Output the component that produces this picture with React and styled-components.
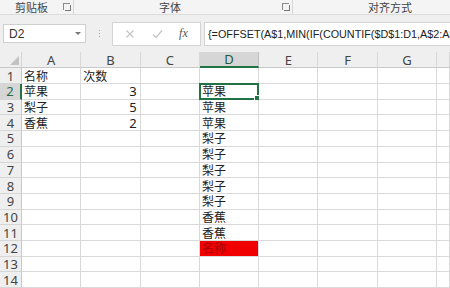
import React from 'react'
import styled, { createGlobalStyle } from 'styled-components'

const Global = createGlobalStyle`
  html, body { margin: 0; padding: 0; background: #fff; overflow: hidden; }
  body { font-family: "Noto Sans", "Noto Sans CJK SC", sans-serif; }
`

const Page = styled.div`
  width: 450px;
  height: 288px;
  overflow: hidden;
  display: flex;
  flex-direction: column;
  background: #fff;
`

const Ribbon = styled.div`
  height: 15px;
  display: flex;
  background: #f4f4f4;
  border-bottom: 1px solid #dcdcdc;
`

const Group = styled.div`
  position: relative;
  width: ${p => p.w}px;
  flex: none;
  display: flex;
  align-items: center;
  padding-left: ${p => p.pl}px;
  box-sizing: border-box;
  border-right: 1px solid ${p => (p.last ? 'transparent' : '#d6d6d6')};
  font-family: "Noto Sans CJK SC", sans-serif;
  font-size: 11px;
  line-height: 13px;
  color: #444;
`

const Launcher = styled.span`
  position: absolute;
  right: 3px;
  top: 3px;
  width: 6px;
  height: 6px;
  border-left: 1px solid #8a8a8a;
  border-top: 1px solid #8a8a8a;
  &::after {
    content: '';
    position: absolute;
    left: 1px;
    top: 1px;
    width: 5px;
    height: 5px;
    border-right: 1px solid #777;
    border-bottom: 1px solid #777;
  }
`

const FormulaBar = styled.div`
  height: 38px;
  display: flex;
  align-items: center;
  background: #efefef;
  padding: 1px 0 0 3px;
  box-sizing: border-box;
`

const NameBox = styled.div`
  width: 83px;
  height: 19px;
  box-sizing: border-box;
  background: #fff;
  border: 1px solid #cfcfcf;
  display: flex;
  align-items: center;
  justify-content: space-between;
  padding: 0 4px 0 5px;
  font-family: "Liberation Sans", sans-serif;
  font-size: 12px;
  color: #333;
`

const Caret = styled.span`
  width: 0;
  height: 0;
  border-left: 3px solid transparent;
  border-right: 3px solid transparent;
  border-top: 3px solid #777;
`

const Dots = styled.div`
  width: 26px;
  display: flex;
  flex-direction: column;
  align-items: center;
  gap: 2px;
  & span { width: 1px; height: 1px; background: #aaa; }
`

const FxBox = styled.div`
  width: 89px;
  height: 24px;
  box-sizing: border-box;
  background: #fff;
  border: 1px solid #d4d4d4;
  display: flex;
  align-items: center;
  justify-content: space-around;
  padding: 0 4px;
`

const Fx = styled.span`
  font-family: "Liberation Serif", serif;
  font-style: italic;
  font-size: 12px;
  color: #555;
`

const Formula = styled.div`
  flex: 1;
  min-width: 0;
  height: 24px;
  margin-left: 3px;
  background: #fff;
  border: 1px solid #d4d4d4;
  border-right: none;
  box-sizing: border-box;
  display: flex;
  align-items: center;
  padding-left: 3px;
  white-space: nowrap;
  overflow: hidden;
  font-family: "Liberation Sans", sans-serif;
  font-size: 10.8px;
  color: #222;
`

const Gap = styled.div`
  height: 1px;
  background: #efefef;
`

const Sheet = styled.div`
  display: grid;
  grid-template-columns: 22px repeat(7, 59.3px) 1fr;
  grid-template-rows: 16px;
  grid-auto-rows: 15.7px;
`

const Corner = styled.div`
  position: relative;
  background: #efefef;
  border-right: 1px solid #d4d4d4;
  border-bottom: 1px solid #c8c8c8;
  &::after {
    content: '';
    position: absolute;
    right: 2px;
    bottom: 2px;
    border-left: 9px solid transparent;
    border-bottom: 9px solid #c2c2c2;
  }
`

const ColHead = styled.div`
  box-sizing: border-box;
  background: ${p => (p.active ? '#d6d6d6' : '#efefef')};
  border-right: 1px solid ${p => (p.active ? '#c0c0c0' : '#d8d8d8')};
  border-bottom: ${p => (p.active ? '2px solid #217346' : '1px solid #c8c8c8')};
  display: flex;
  align-items: center;
  justify-content: center;
  font-family: "Noto Sans", sans-serif;
  font-size: 13px;
  line-height: 14px;
  color: ${p => (p.active ? '#1e5a36' : '#444')};
`

const RowHead = styled.div`
  box-sizing: border-box;
  background: ${p => (p.active ? '#d6d6d6' : '#efefef')};
  border-right: ${p => (p.active ? '2px solid #217346' : '1px solid #c8c8c8')};
  border-bottom: 1px solid #d6d6d6;
  display: flex;
  align-items: center;
  justify-content: center;
  font-family: "Noto Sans", sans-serif;
  font-size: 13px;
  line-height: 14px;
  color: ${p => (p.active ? '#2c6a44' : '#444')};
`

const Cell = styled.div`
  position: relative;
  box-sizing: border-box;
  border-right: 1px solid #d9d9d9;
  border-bottom: 1px solid #d9d9d9;
  background: ${p => p.bg || '#fff'};
  display: flex;
  align-items: center;
  justify-content: ${p => (p.num ? 'flex-end' : 'flex-start')};
  padding: 0 3px 0 2px;
  white-space: nowrap;
  font-family: ${p => (p.num ? '"Noto Sans", sans-serif' : '"Noto Sans CJK SC", sans-serif')};
  font-size: ${p => (p.num ? '13px' : '12px')};
  line-height: 14px;
  color: ${p => p.color || '#222'};
`

const Selection = styled.div`
  position: absolute;
  left: -1px;
  top: -1px;
  right: -1px;
  bottom: -1px;
  border: 2px solid #217346;
  pointer-events: none;
  &::after {
    content: '';
    position: absolute;
    right: -4px;
    bottom: -4px;
    width: 5px;
    height: 5px;
    background: #217346;
    border: 1px solid #fff;
  }
`

const cols = ['A', 'B', 'C', 'D', 'E', 'F', 'G', '']

const data = {
  1: { A: '名称', B: '次数' },
  2: { A: '苹果', B: '3', D: '苹果' },
  3: { A: '梨子', B: '5', D: '苹果' },
  4: { A: '香蕉', B: '2', D: '苹果' },
  5: { D: '梨子' },
  6: { D: '梨子' },
  7: { D: '梨子' },
  8: { D: '梨子' },
  9: { D: '梨子' },
  10: { D: '香蕉' },
  11: { D: '香蕉' },
  12: { D: '名称' },
}

const rows = Array.from({ length: 14 }, (_, i) => i + 1)

export default function App() {
  return (
    <Page>
      <Global />
      <Ribbon>
        <Group w={74} pl={15}>剪贴板<Launcher /></Group>
        <Group w={219} pl={85}>字体<Launcher /></Group>
        <Group w={157} pl={75} last>对齐方式</Group>
      </Ribbon>
      <FormulaBar>
        <NameBox>D2<Caret /></NameBox>
        <Dots><span /><span /><span /></Dots>
        <FxBox>
          <svg width="10" height="10" viewBox="0 0 10 10">
            <path d="M1.5 1.5 L8.5 8.5 M8.5 1.5 L1.5 8.5" stroke="#c4c4c4" strokeWidth="1.2" />
          </svg>
          <svg width="11" height="10" viewBox="0 0 11 10">
            <path d="M1 5.5 L4 8.5 L10 1.5" stroke="#c4c4c4" strokeWidth="1.2" fill="none" />
          </svg>
          <Fx>fx</Fx>
        </FxBox>
        <Formula>{'{=OFFSET(A$1,MIN(IF(COUNTIF($D$1:D1,A$2:A$'}</Formula>
      </FormulaBar>
      <Gap />
      <Sheet>
        <Corner />
        {cols.map((c, i) => (
          <ColHead key={i} active={c === 'D'}>{c}</ColHead>
        ))}
        {rows.map(r => (
          <React.Fragment key={r}>
            <RowHead active={r === 2}>{r}</RowHead>
            {cols.map((c, i) => {
              const v = (data[r] || {})[c]
              const red = r === 12 && c === 'D'
              return (
                <Cell
                  key={i}
                  num={c === 'B' && r > 1}
                  bg={red ? '#f00000' : undefined}
                  color={red ? '#a80000' : undefined}
                >
                  {v}
                  {r === 2 && c === 'D' && <Selection />}
                </Cell>
              )
            })}
          </React.Fragment>
        ))}
      </Sheet>
    </Page>
  )
}
